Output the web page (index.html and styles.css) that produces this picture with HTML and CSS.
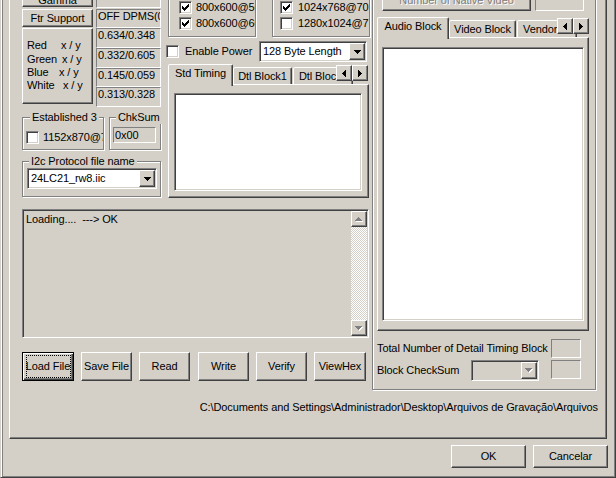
FILE: index.html
```html
<!DOCTYPE html>
<html lang="pt">
<head>
<meta charset="utf-8">
<title>EDID Tool</title>
<link rel="stylesheet" href="styles.css">
</head>
<body>
<div class="dialog">
  <div class="page">
    <div class="main">
      <div class="leftpart">
        <div class="toparea">
          <div class="colL">
            <div class="pair">
              <div class="sub-btns">
                <div class="btn gamma">Gamma</div>
                <div class="btn ftr">Ftr Support</div>
                <div class="btn big">
                  <div class="xy">
                    <span>Red</span><span>x / y</span>
                    <span>Green</span><span class="s1">x / y</span>
                    <span>Blue</span><span class="sm2">x / y</span>
                    <span>White</span><span class="s2">x / y</span>
                  </div>
                </div>
              </div>
              <div class="sub-vals">
                <div class="val v22">2.2</div>
                <div class="val h19 first">OFF DPMS(0x00)</div>
                <div class="val h20">0.634/0.348</div>
                <div class="val h20">0.332/0.605</div>
                <div class="val h19">0.145/0.059</div>
                <div class="val h20">0.313/0.328</div>
              </div>
            </div>
            <div class="row-est">
              <div class="group est">
                <span class="legend lg-est">Established 3</span>
                <div class="cbrow">
                  <span class="cb"></span><span class="cbtext">1152x870@75</span>
                </div>
              </div>
              <div class="group chk">
                <span class="legend">ChkSum</span>
                <div class="val chkval">0x00</div>
              </div>
            </div>
            <div class="group i2c">
              <span class="legend">I2c Protocol file name</span>
              <div class="combo c-i2c">
                <span class="combo-text">24LC21_rw8.iic</span>
                <span class="btn combo-btn"><svg width="7" height="4" viewBox="0 0 7 4" shape-rendering="crispEdges"><path d="M0 0h7v1h-7z M1 1h5v1h-5z M2 2h3v1h-3z M3 3h1v1h-1z" fill="#000"/></svg></span>
              </div>
            </div>
          </div>
          <div class="colM">
            <div class="grow">
              <div class="group gA">
                <div class="cbrow">
                  <span class="cb"><svg class="chkmark" width="11" height="11" viewBox="0 0 11 11" shape-rendering="crispEdges"><path d="M8 2h1v1h-1z M7 3h2v1h-2z M2 4h1v1h-1z M6 4h3v1h-3z M2 5h2v1h-2z M5 5h3v1h-3z M2 6h5v1h-5z M3 7h3v1h-3z M4 8h1v1h-1z" fill="#000"/></svg></span><span class="cbtext t4">800x600@56</span>
                </div>
                <div class="cbrow">
                  <span class="cb"><svg class="chkmark" width="11" height="11" viewBox="0 0 11 11" shape-rendering="crispEdges"><path d="M8 2h1v1h-1z M7 3h2v1h-2z M2 4h1v1h-1z M6 4h3v1h-3z M2 5h2v1h-2z M5 5h3v1h-3z M2 6h5v1h-5z M3 7h3v1h-3z M4 8h1v1h-1z" fill="#000"/></svg></span><span class="cbtext t4">800x600@60</span>
                </div>
              </div>
              <div class="group gB">
                <div class="cbrow">
                  <span class="cb"><svg class="chkmark" width="11" height="11" viewBox="0 0 11 11" shape-rendering="crispEdges"><path d="M8 2h1v1h-1z M7 3h2v1h-2z M2 4h1v1h-1z M6 4h3v1h-3z M2 5h2v1h-2z M5 5h3v1h-3z M2 6h5v1h-5z M3 7h3v1h-3z M4 8h1v1h-1z" fill="#000"/></svg></span><span class="cbtext t5">1024x768@70</span>
                </div>
                <div class="cbrow">
                  <span class="cb"></span><span class="cbtext t5">1280x1024@75</span>
                </div>
              </div>
            </div>
            <div class="enrow">
              <span class="cb"></span><span class="entext">Enable Power</span>
              <div class="combo c128">
                <span class="combo-text">128 Byte Length</span>
                <span class="btn combo-btn"><svg width="7" height="4" viewBox="0 0 7 4" shape-rendering="crispEdges"><path d="M0 0h7v1h-7z M1 1h5v1h-5z M2 2h3v1h-3z M3 3h1v1h-1z" fill="#000"/></svg></span>
              </div>
            </div>
            <div class="tabctl tabs-mid">
              <div class="strip">
                <div class="tab sel mt1">Std Timing</div>
                <div class="tab mt2">Dtl Block1</div>
                <div class="tab mt3">Dtl Block2</div>
              </div>
              <div class="spin spin-mid">
                <span class="btn sbtn"><svg width="4" height="7" viewBox="0 0 4 7" shape-rendering="crispEdges"><path d="M3 0h1v7h-1z M2 1h1v5h-1z M1 2h1v3h-1z M0 3h1v1h-1z" fill="#000"/></svg></span>
                <span class="btn sbtn"><svg width="4" height="7" viewBox="0 0 4 7" shape-rendering="crispEdges"><path d="M0 0h1v7h-1z M1 1h1v5h-1z M2 2h1v3h-1z M3 3h1v1h-1z" fill="#000"/></svg></span>
              </div>
              <div class="panel mpanel">
                <div class="list mlist"></div>
              </div>
            </div>
          </div>
        </div>
        <div class="edit">
          <div class="edit-text">Loading....  ---&gt; OK</div>
          <div class="vscroll">
            <span class="btn sbtn"><svg width="8" height="5" viewBox="0 0 8 5" shape-rendering="crispEdges"><path d="M4 1h1v1h-1z M3 2h3v1h-3z M2 3h5v1h-5z M1 4h7v1h-7z" fill="#fff"/><path d="M3 0h1v1h-1z M2 1h3v1h-3z M1 2h5v1h-5z M0 3h7v1h-7z" fill="#808080"/></svg></span>
            <span class="btn sbtn"><svg width="8" height="5" viewBox="0 0 8 5" shape-rendering="crispEdges"><path d="M1 1h7v1h-7z M2 2h5v1h-5z M3 3h3v1h-3z M4 4h1v1h-1z" fill="#fff"/><path d="M0 0h7v1h-7z M1 1h5v1h-5z M2 2h3v1h-3z M3 3h1v1h-1z" fill="#808080"/></svg></span>
          </div>
        </div>
        <div class="btnrow">
          <div class="btn b load">Load File</div>
          <div class="btn b">Save File</div>
          <div class="btn b">Read</div>
          <div class="btn b write">Write</div>
          <div class="btn b">Verify</div>
          <div class="btn b vhex">ViewHex</div>
        </div>
      </div>
      <div class="group rgroup">
        <div class="rtop">
          <div class="btn native">Number of Native Video</div>
          <div class="val nbox"></div>
        </div>
        <div class="tabctl rtabs">
          <div class="strip">
            <div class="tab sel rt1">Audio Block</div>
            <div class="tab rt2">Video Block</div>
            <div class="tab rt3">Vendor Block</div>
          </div>
          <div class="spin spin-r">
            <span class="btn sbtn"><svg width="4" height="7" viewBox="0 0 4 7" shape-rendering="crispEdges"><path d="M3 0h1v7h-1z M2 1h1v5h-1z M1 2h1v3h-1z M0 3h1v1h-1z" fill="#000"/></svg></span>
            <span class="btn sbtn"><svg width="4" height="7" viewBox="0 0 4 7" shape-rendering="crispEdges"><path d="M0 0h1v7h-1z M1 1h1v5h-1z M2 2h1v3h-1z M3 3h1v1h-1z" fill="#000"/></svg></span>
          </div>
          <div class="panel rpanel">
            <div class="list rlist"></div>
          </div>
        </div>
        <div class="rinfo">
          <span class="ilabel wide">Total Number of Detail Timing Block</span>
          <div class="val ibox"></div>
          <span class="ilabel">Block CheckSum</span>
          <div class="combo dcombo">
            <span class="combo-text"></span>
            <span class="btn combo-btn"><svg width="8" height="5" viewBox="0 0 8 5" shape-rendering="crispEdges"><path d="M1 1h7v1h-7z M2 2h5v1h-5z M3 3h3v1h-3z M4 4h1v1h-1z" fill="#fff"/><path d="M0 0h7v1h-7z M1 1h5v1h-5z M2 2h3v1h-3z M3 3h1v1h-1z" fill="#808080"/></svg></span>
          </div>
          <div class="val ibox ibox2"></div>
        </div>
      </div>
    </div>
    <div class="path">C:\Documents and Settings\Administrador\Desktop\Arquivos de Gravação\Arquivos</div>
  </div>
  <div class="footer">
    <div class="btn fbtn">OK</div>
    <div class="btn fbtn">Cancelar</div>
  </div>
</div>
</body>
</html>
```

FILE: styles.css
```css
* { box-sizing: border-box; }
html, body { margin: 0; padding: 0; }
body {
  width: 616px;
  height: 478px;
  overflow: hidden;
  background: #D4D0C8;
  font-family: "Liberation Sans", Arial, sans-serif;
  font-size: 11px;
  letter-spacing: -0.1px;
  line-height: 13px;
  color: #000;
}

.dialog {
  width: 616px;
  height: 478px;
  border-left: 1px solid #D4D0C8;
  border-right: 1px solid #404040;
  border-bottom: 1px solid #404040;
  box-shadow: inset 1px 0 #fff, inset 2px 0 #808080, inset -1px -1px #808080;
  display: flex;
  flex-direction: column;
  overflow: hidden;
}

.page {
  margin-left: 8px;
  width: 598px;
  height: 439px;
  flex: none;
  border-left: 1px solid #fff;
  border-right: 1px solid #404040;
  border-bottom: 1px solid #404040;
  box-shadow: inset -1px -1px #808080;
  display: flex;
  flex-direction: column;
}

.main {
  display: flex;
  align-items: flex-start;
  margin-top: -16px;
  padding-left: 12px;
}
.leftpart { width: 349px; flex: none; display: flex; flex-direction: column; }
.toparea { display: flex; align-items: flex-start; }
.colL { width: 140px; flex: none; display: flex; flex-direction: column; }
.colM { width: 205px; flex: none; margin-left: 4px; display: flex; flex-direction: column; }

/* generic controls */
.btn {
  display: flex;
  align-items: center;
  justify-content: center;
  background: #D4D0C8;
  border: 1px solid;
  border-color: #fff #404040 #404040 #fff;
  box-shadow: inset -1px -1px #808080;
  white-space: nowrap;
  overflow: hidden;
  flex: none;
}
.val {
  border: 1px solid;
  border-color: #808080 #fff #fff #808080;
  padding-left: 1px;
  white-space: nowrap;
  overflow: hidden;
  flex: none;
}
.group {
  position: relative;
  border: 1px solid #808080;
  box-shadow: 1px 1px 0 #fff, inset 1px 1px 0 #fff;
  flex: none;
}
.legend {
  position: absolute;
  top: -7px;
  left: 6px;
  padding: 0 2px;
  background: #D4D0C8;
  white-space: nowrap;
}
.lg-est { left: 7px; }

.cb {
  position: relative;
  width: 13px;
  height: 13px;
  flex: none;
  background: #fff;
  border: 1px solid;
  border-color: #808080 #fff #fff #808080;
  box-shadow: inset 1px 1px #404040, inset -1px -1px #D4D0C8;
}
.chkmark { display: block; }
.cbrow { display: flex; align-items: center; height: 13px; margin-bottom: 3px; }
.cbtext { margin-left: 4px; white-space: nowrap; overflow: hidden; flex: 1; min-width: 0; }
.t5 { margin-left: 5px; }

.combo {
  display: flex;
  align-items: stretch;
  height: 21px;
  background: #fff;
  border: 1px solid;
  border-color: #808080 #fff #fff #808080;
  box-shadow: inset 1px 1px #404040, inset -1px -1px #D4D0C8;
  padding: 1px;
  flex: none;
}
.combo-text {
  flex: 1;
  min-width: 0;
  padding-left: 2px;
  display: flex;
  align-items: center;
  white-space: nowrap;
  overflow: hidden;
}
.combo-btn { width: 16px; }

/* left column */
.pair { display: flex; gap: 3px; align-items: flex-start; }
.sub-btns { width: 71px; display: flex; flex-direction: column; }
.sub-vals { width: 65px; display: flex; flex-direction: column; }
.gamma { height: 23px; align-items: flex-start; padding-top: 9px; }
.ftr { height: 18px; margin-top: 2px; }
.big { height: 76px; margin-top: 1px; justify-content: flex-start; padding-left: 4px; }
.xy { display: grid; grid-template-columns: 34px auto; line-height: 13.4px; }
.s1 { margin-left: 1px; }
.sm2 { margin-left: -2px; }
.s2 { margin-left: 2px; }
.v22 { margin-top: 5px; height: 19px; }
.first { margin-top: 1px; }
.h19 { height: 19px; }
.h20 { height: 20px; }

.row-est { display: flex; gap: 5px; margin-top: 10px; }
.est { width: 82px; height: 33px; padding: 13px 0 0 3px; }
.chk { width: 52px; height: 33px; padding: 9px 0 0 3px; }
.chkval { width: 43px; height: 16px; padding-top: 1px; }
.i2c { width: 139px; height: 36px; margin-top: 11px; padding: 6px 0 0 4px; }
.c-i2c { width: 130px; }

/* middle column */
.grow { display: flex; }
.gA { margin-left: 2px; width: 88px; height: 53px; padding: 16px 0 0 10px; }
.gB { margin-left: 16px; width: 98px; height: 53px; padding: 16px 0 0 7px; }
.enrow { display: flex; align-items: center; height: 21px; margin-top: 4px; }
.entext { margin-left: 6px; white-space: nowrap; }
.c128 { width: 108px; margin-left: auto; margin-right: 4px; }

.tabctl { position: relative; flex: none; }
.strip { display: flex; align-items: flex-end; height: 20px; }
.tab {
  height: 17px;
  flex: none;
  border: 1px solid;
  border-bottom: 0;
  border-color: #fff #404040 transparent #fff;
  box-shadow: inset -1px 0 #808080;
  border-radius: 2px 2px 0 0;
  padding-top: 2px;
  text-align: center;
  white-space: nowrap;
  overflow: hidden;
  background: #D4D0C8;
}
.tab.sel { height: 22px; margin-bottom: -2px; position: relative; z-index: 2; }
.panel {
  border: 1px solid;
  border-color: #fff #404040 #404040 #fff;
  box-shadow: inset -1px -1px #808080;
}
.spin { position: absolute; top: 1px; right: 0; display: flex; z-index: 3; }
.spin-mid { right: 1px; }
.sbtn { width: 16px; height: 16px; }
.list {
  background: #fff;
  border: 1px solid;
  border-color: #808080 #fff #fff #808080;
  box-shadow: inset 1px 1px #404040, inset -1px -1px #D4D0C8;
}
.tabs-mid { margin: 2px 0 0 2px; width: 201px; }
.mt1 { width: 65px; }
.mt2 { width: 59px; }
.mt3 { width: 60px; margin-left: 1px; text-align: left; padding-left: 5px; }
.mpanel { height: 114px; }
.mlist { margin: 8px 0 0 5px; width: 188px; height: 98px; }

/* edit box */
.edit {
  margin-top: 11px;
  width: 347px;
  height: 129px;
  display: flex;
  background: #D4D0C8;
  border: 1px solid;
  border-color: #808080 #fff #fff #808080;
  box-shadow: inset 1px 1px #404040, inset -1px -1px #D4D0C8;
  padding: 1px;
}
.edit-text { flex: 1; padding: 2px 0 0 2px; white-space: pre; }
.vscroll {
  width: 16px;
  flex: none;
  display: flex;
  flex-direction: column;
  justify-content: space-between;
  background: repeating-conic-gradient(#fff 0 25%, #D4D0C8 0 50%) 0 0 / 2px 2px;
}

/* buttons row */
.btnrow { display: flex; gap: 7px; margin-top: 14px; }
.b { width: 51px; height: 29px; }
.load {
  width: 52px;
  position: relative;
  border: 1px solid #000;
  box-shadow: inset 1px 1px #fff, inset -1px -1px #404040, inset -2px -2px #808080;
}
.load::after {
  content: "";
  position: absolute;
  top: 2px; right: 2px; bottom: 2px; left: 3px;
  border: 1px dotted #000;
}
.write { margin-left: 1px; }
.vhex { width: 52px; }

/* right group */
.rgroup { margin-left: 1px; width: 224px; height: 406px; display: flex; flex-direction: column; }
.rtop { display: flex; margin: 4px 0 0 9px; }
.native { width: 149px; height: 22px; align-items: flex-start; padding-top: 4px; color: #808080; text-shadow: 1px 1px 0 #fff; }
.nbox { width: 49px; height: 22px; margin-left: 4px; }
.rtabs { margin: 6px 0 0 4px; width: 212px; }
.rt1 { width: 72px; }
.rt2 { width: 67px; }
.rt3 { width: 60px; margin-left: 1px; text-align: left; padding-left: 5px; }
.rpanel { height: 294px; }
.rlist { margin: 9px 0 0 4px; width: 202px; height: 274px; }
.rinfo {
  display: grid;
  grid-template-columns: 1fr 68px 30px;
  grid-template-rows: 19px 21px;
  column-gap: 12px;
  row-gap: 2px;
  margin: 8px 0 0 4px;
  width: 202px;
}
.ilabel { align-self: center; white-space: nowrap; }
.wide { grid-column: 1 / 3; }
.ibox { height: 19px; }
.dcombo { background: #D4D0C8; }

/* path & footer */
.path { margin-top: 11px; padding-right: 8px; text-align: right; white-space: nowrap; }
.footer { display: flex; justify-content: flex-end; gap: 7px; margin-top: 6px; padding-right: 7px; }
.fbtn { width: 75px; height: 23px; }
```
